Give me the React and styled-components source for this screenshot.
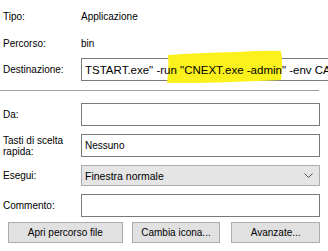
import React from "react";
import styled, { createGlobalStyle } from "styled-components";

const GlobalStyle = createGlobalStyle`
  body {
    margin: 0;
    background: #ffffff;
    font-family: "Liberation Sans", Arial, sans-serif;
    font-size: 10px;
    color: #000000;
  }
`;

const Panel = styled.div`
  width: 320px;
  padding: 6px 0 0 3px;
  box-sizing: border-box;
`;

const Row = styled.div`
  display: grid;
  grid-template-columns: 78px 1fr;
  align-items: center;
  height: ${props => props.h || 20}px;
  margin-top: ${props => props.mt || 0}px;
`;

const Label = styled.div`
  line-height: 11px;
`;

const Value = styled.div`
  padding-left: 0;
`;

const Separator = styled.div`
  height: 1px;
  background: #a0a0a0;
  margin: 9px 1px 0 -3px;
`;

const Field = styled.div`
  position: relative;
  height: 100%;
  box-sizing: border-box;
  border: 1px solid #7a7a7a;
  background: #ffffff;
`;

const FieldText = styled.div`
  position: relative;
  z-index: 2;
  height: 100%;
  display: flex;
  align-items: center;
  padding-left: 3px;
  white-space: nowrap;
  overflow: hidden;
  font-size: ${props => props.size || 10}px;
`;

const Highlight = styled.svg`
  position: absolute;
  z-index: 1;
  left: 85px;
  top: -9px;
  width: 116px;
  height: 34px;
`;

const Select = styled.div`
  height: 100%;
  box-sizing: border-box;
  border: 1px solid #adadad;
  background: #e5e5e5;
  display: flex;
  align-items: center;
  justify-content: space-between;
  padding: 0 6px 0 3px;
  font-size: 10.5px;
`;

const Buttons = styled.div`
  display: flex;
  margin-top: 5px;
  padding-left: 5px;
  height: 21px;
`;

const Button = styled.button`
  width: ${props => props.w}px;
  margin-left: ${props => props.ml || 0}px;
  height: 100%;
  border: 1px solid #adadad;
  background: #e1e1e1;
  font-family: "Liberation Sans", Arial, sans-serif;
  font-size: 10px;
  color: #000000;
  padding: 0;
`;

export default function App() {
  return (
    <>
      <GlobalStyle />
      <Panel>
        <Row>
          <Label>Tipo:</Label>
          <Value>Applicazione</Value>
        </Row>
        <Row mt={7}>
          <Label>Percorso:</Label>
          <Value>bin</Value>
        </Row>
        <Row h={23} mt={5}>
          <Label>Destinazione:</Label>
          <Field>
            <Highlight viewBox="0 0 116 34" preserveAspectRatio="none">
              <path
                d="M1 5 Q 30 3 70 2 Q 100 0 114 1 Q 116 12 114 30 Q 70 32 30 33 L 0 33 Q 2 18 1 5 Z"
                fill="#fbf11c"
              />
            </Highlight>
            <FieldText size={11.5}>TSTART.exe" -run "CNEXT.exe -admin" -env CA"</FieldText>
          </Field>
        </Row>
        <Separator />
        <Row h={23} mt={12}>
          <Label>Da:</Label>
          <Field />
        </Row>
        <Row h={23} mt={8}>
          <Label>
            Tasti di scelta
            <br />
            rapida:
          </Label>
          <Field>
            <FieldText>Nessuno</FieldText>
          </Field>
        </Row>
        <Row h={21} mt={8}>
          <Label>Esegui:</Label>
          <Select>
            <span>Finestra normale</span>
            <svg width="9" height="5" viewBox="0 0 9 5">
              <path d="M0.5 0.5 L4.5 4.5 L8.5 0.5" fill="none" stroke="#555" strokeWidth="1" />
            </svg>
          </Select>
        </Row>
        <Row h={23} mt={8}>
          <Label>Commento:</Label>
          <Field />
        </Row>
        <Buttons>
          <Button w={115}>Apri percorso file</Button>
          <Button w={89} ml={9}>Cambia icona...</Button>
          <Button w={89} ml={11}>Avanzate...</Button>
        </Buttons>
      </Panel>
    </>
  );
}
